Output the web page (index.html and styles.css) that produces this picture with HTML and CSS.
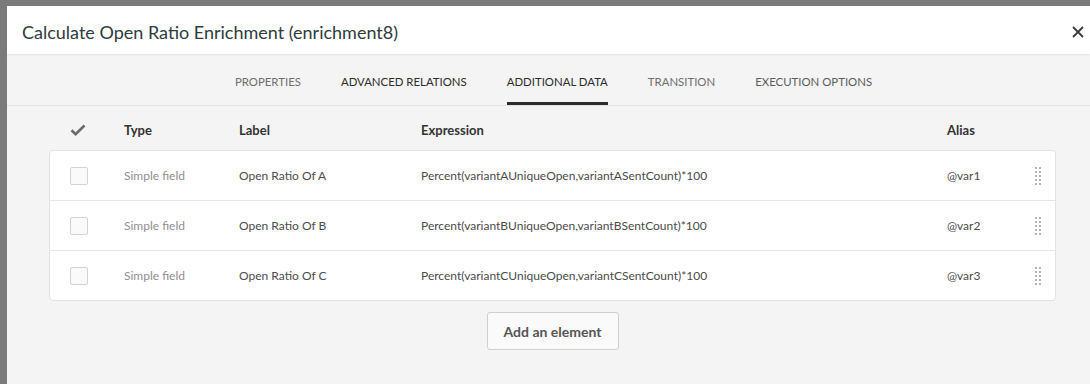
FILE: index.html
```html
<!DOCTYPE html>
<html>
<head>
    <title>Calculate Open Ratio Enrichment</title>
    <link rel="stylesheet" href="styles.css">
</head>
<body>
    <div class="dialog">
        <div class="dialog-header">
            <h1>Calculate Open Ratio Enrichment (enrichment8)</h1>
            <button class="close" aria-label="Close">
                <svg width="12" height="12" viewBox="0 0 12 12"><path d="M1 1L11 11M11 1L1 11" stroke="#3a3a3a" stroke-width="1.8" fill="none"/></svg>
            </button>
        </div>

        <div class="tabs">
            <a class="tab">PROPERTIES</a>
            <a class="tab dark">ADVANCED RELATIONS</a>
            <a class="tab active">ADDITIONAL DATA</a>
            <a class="tab">TRANSITION</a>
            <a class="tab muted">EXECUTION OPTIONS</a>
        </div>

        <div class="content">
            <div class="grid head">
                <span class="check-all">
                    <svg width="16" height="12" viewBox="0 0 16 12"><path d="M1.5 6.2L5.6 10.2L14.5 1.5" stroke="#6b6b6b" stroke-width="2.6" fill="none"/></svg>
                </span>
                <span>Type</span>
                <span>Label</span>
                <span>Expression</span>
                <span>Alias</span>
                <span></span>
            </div>

            <div class="card">
                <div class="grid row">
                    <span class="box"></span>
                    <span class="type">Simple field</span>
                    <span>Open Ratio Of A</span>
                    <span>Percent(variantAUniqueOpen,variantASentCount)*100</span>
                    <span>@var1</span>
                    <span class="handle"><svg width="6" height="18" viewBox="0 0 6 18"><g fill="#b3b3b3"><rect x="0" y="0" width="2" height="2"/><rect x="4" y="0" width="2" height="2"/><rect x="0" y="4" width="2" height="2"/><rect x="4" y="4" width="2" height="2"/><rect x="0" y="8" width="2" height="2"/><rect x="4" y="8" width="2" height="2"/><rect x="0" y="12" width="2" height="2"/><rect x="4" y="12" width="2" height="2"/><rect x="0" y="16" width="2" height="2"/><rect x="4" y="16" width="2" height="2"/></g></svg></span>
                </div>
                <div class="grid row">
                    <span class="box"></span>
                    <span class="type">Simple field</span>
                    <span>Open Ratio Of B</span>
                    <span>Percent(variantBUniqueOpen,variantBSentCount)*100</span>
                    <span>@var2</span>
                    <span class="handle"><svg width="6" height="18" viewBox="0 0 6 18"><g fill="#b3b3b3"><rect x="0" y="0" width="2" height="2"/><rect x="4" y="0" width="2" height="2"/><rect x="0" y="4" width="2" height="2"/><rect x="4" y="4" width="2" height="2"/><rect x="0" y="8" width="2" height="2"/><rect x="4" y="8" width="2" height="2"/><rect x="0" y="12" width="2" height="2"/><rect x="4" y="12" width="2" height="2"/><rect x="0" y="16" width="2" height="2"/><rect x="4" y="16" width="2" height="2"/></g></svg></span>
                </div>
                <div class="grid row">
                    <span class="box"></span>
                    <span class="type">Simple field</span>
                    <span>Open Ratio Of C</span>
                    <span>Percent(variantCUniqueOpen,variantCSentCount)*100</span>
                    <span>@var3</span>
                    <span class="handle"><svg width="6" height="18" viewBox="0 0 6 18"><g fill="#b3b3b3"><rect x="0" y="0" width="2" height="2"/><rect x="4" y="0" width="2" height="2"/><rect x="0" y="4" width="2" height="2"/><rect x="4" y="4" width="2" height="2"/><rect x="0" y="8" width="2" height="2"/><rect x="4" y="8" width="2" height="2"/><rect x="0" y="12" width="2" height="2"/><rect x="4" y="12" width="2" height="2"/><rect x="0" y="16" width="2" height="2"/><rect x="4" y="16" width="2" height="2"/></g></svg></span>
                </div>
            </div>

            <div class="actions">
                <button class="add">Add an element</button>
            </div>
        </div>
    </div>
</body>
</html>
```

FILE: styles.css
```css
html, body {
    margin: 0;
    height: 100%;
    overflow: hidden;
}
body {
    background: #7a7a7a;
    font-family: Lato, "Open Sans", sans-serif;
    padding: 6px 0 0 7px;
    box-sizing: border-box;
}
.dialog {
    background: #f4f4f4;
    height: 100%;
}
.dialog-header {
    background: #fff;
    height: 48px;
    display: flex;
    align-items: center;
    justify-content: space-between;
    padding: 0 6px 0 15px;
    box-shadow: 0 1px 2px rgba(0, 0, 0, 0.08);
    position: relative;
}
h1 {
    margin: 0;
    font-size: 18px;
    font-weight: normal;
    color: #2f3b3e;
    padding-top: 3px;
}
.close {
    border: none;
    background: none;
    padding: 0;
    width: 12px;
    height: 12px;
    margin-top: 3px;
    cursor: pointer;
}
.tabs {
    display: flex;
    justify-content: center;
    gap: 40px;
    height: 51px;
    border-bottom: 1px solid #e2e2e2;
    padding-left: 10px;
}
.tab {
    display: flex;
    align-items: center;
    font-size: 11.4px;
    color: #6e6e6e;
    border-bottom: 3px solid transparent;
    padding-top: 6px;
}
.tab.dark, .tab.active {
    color: #2c2c2c;
}
.tab.muted {
    color: #5c5c5c;
}
.tab.active {
    border-bottom-color: #2c2c2c;
}
.content {
    padding: 4px 34px 0 42px;
}
.grid {
    display: grid;
    grid-template-columns: 54px 115px 182px 526px 88px 1fr;
    align-items: center;
    padding-left: 20px;
}
.head {
    height: 40px;
    font-size: 13px;
    font-weight: bold;
    color: #333;
    padding-left: 21px;
}
.check-all svg {
    display: block;
    margin-top: -1px;
}
.card {
    background: #fff;
    border: 1px solid #e2e2e2;
    border-radius: 4px;
}
.row {
    height: 49px;
    font-size: 12px;
    color: #4b4b4b;
    border-top: 1px solid #e6e6e6;
}
.row:first-child {
    border-top: none;
}
.box {
    width: 16px;
    height: 16px;
    border: 1px solid #d3d3d3;
    border-radius: 2px;
    background: #fafafa;
}
.type {
    color: #8f8f8f;
}
.handle svg {
    display: block;
}
.actions {
    display: flex;
    justify-content: center;
    padding-top: 11px;
}
.add {
    width: 132px;
    height: 38px;
    background: #fafafa;
    border: 1px solid #cfcfcf;
    border-radius: 3px;
    font-family: Lato, "Open Sans", sans-serif;
    font-size: 14px;
    font-weight: bold;
    color: #555;
}
```
